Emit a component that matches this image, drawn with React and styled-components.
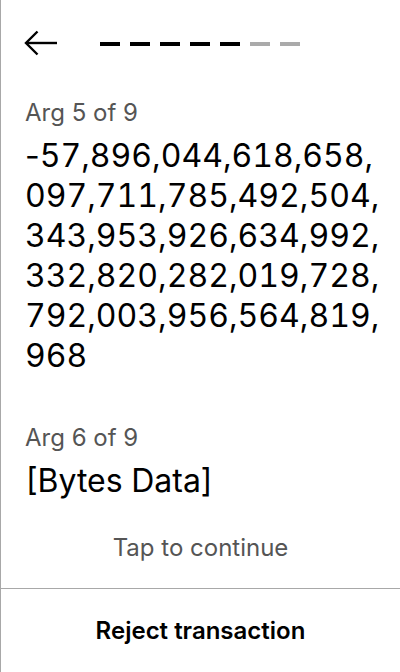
import styled, { createGlobalStyle } from 'styled-components'

const GlobalStyle = createGlobalStyle`
  html, body {
    margin: 0;
    padding: 0;
    background: #fff;
  }
  body {
    font-family: Inter, "Noto Sans", sans-serif;
    color: #000;
  }
`

const Screen = styled.div`
  width: 400px;
  height: 672px;
  box-sizing: border-box;
  border-left: 1px solid #a8a8a8;
  display: flex;
  flex-direction: column;
  overflow: hidden;
`

const Header = styled.div`
  display: flex;
  align-items: center;
  height: 88px;
  padding: 0 0 0 23px;
  box-sizing: border-box;
`

const BackButton = styled.button`
  appearance: none;
  border: none;
  background: transparent;
  padding: 0;
  width: 34px;
  height: 28px;
  display: flex;
  align-items: center;
  cursor: pointer;
`

const Progress = styled.div`
  display: flex;
  gap: 10px;
  margin-left: 42px;
`

const Dash = styled.span`
  width: 20px;
  height: 4px;
  background: ${(p) => (p.done ? '#000' : '#aaaaaa')};
`

const Body = styled.div`
  flex: 1;
  display: flex;
  flex-direction: column;
  padding: 9px 24px 0;
`

const ArgList = styled.div`
  display: flex;
  flex-direction: column;
  gap: 46px;
`

const Label = styled.div`
  font-size: 24px;
  line-height: 32px;
  color: #555;
`

const Value = styled.div`
  font-size: 32px;
  line-height: 40px;
  margin-top: 7px;
  margin-right: -20px;
  font-variant-numeric: tabular-nums;
  overflow-wrap: anywhere;
`

const Sign = styled.span`
  font-variant-numeric: normal;
`

const Hint = styled.div`
  text-align: center;
  font-size: 24px;
  line-height: 32px;
  color: #555;
  margin-top: 31px;
`

const Footer = styled.button`
  appearance: none;
  border: none;
  border-top: 1px solid #a8a8a8;
  background: transparent;
  height: 84px;
  width: 100%;
  font-family: Inter, sans-serif;
  font-size: 24px;
  font-weight: 600;
  color: #000;
  cursor: pointer;
  padding: 0;
`

const steps = [1, 1, 1, 1, 1, 0, 0]

const args = [
  {
    label: 'Arg 5 of 9',
    value:
      '-57,896,044,618,658,097,711,785,492,504,343,953,926,634,992,332,820,282,019,728,792,003,956,564,819,968',
  },
  { label: 'Arg 6 of 9', value: '[Bytes Data]' },
]

const formatValue = (v) => {
  const body = v.replace(/,/g, ',\u200b')
  if (body.startsWith('-')) {
    return (
      <>
        <Sign>-</Sign>
        {body.slice(1)}
      </>
    )
  }
  return body
}

export default function App() {
  return (
    <>
      <GlobalStyle />
      <Screen>
        <Header>
          <BackButton aria-label="Back">
            <svg width="34" height="28" viewBox="0 0 34 28" fill="none">
              <path d="M33 13H3" stroke="#000" strokeWidth="2.4" />
              <path d="M13.5 1.5L2 13l11.5 11.5" stroke="#000" strokeWidth="2.4" />
            </svg>
          </BackButton>
          <Progress>
            {steps.map((s, i) => (
              <Dash key={i} done={s ? 1 : 0} />
            ))}
          </Progress>
        </Header>
        <Body>
          <ArgList>
            {args.map((a) => (
              <div key={a.label}>
                <Label>{a.label}</Label>
                <Value>{formatValue(a.value)}</Value>
              </div>
            ))}
          </ArgList>
          <Hint>Tap to continue</Hint>
        </Body>
        <Footer>Reject transaction</Footer>
      </Screen>
    </>
  )
}
